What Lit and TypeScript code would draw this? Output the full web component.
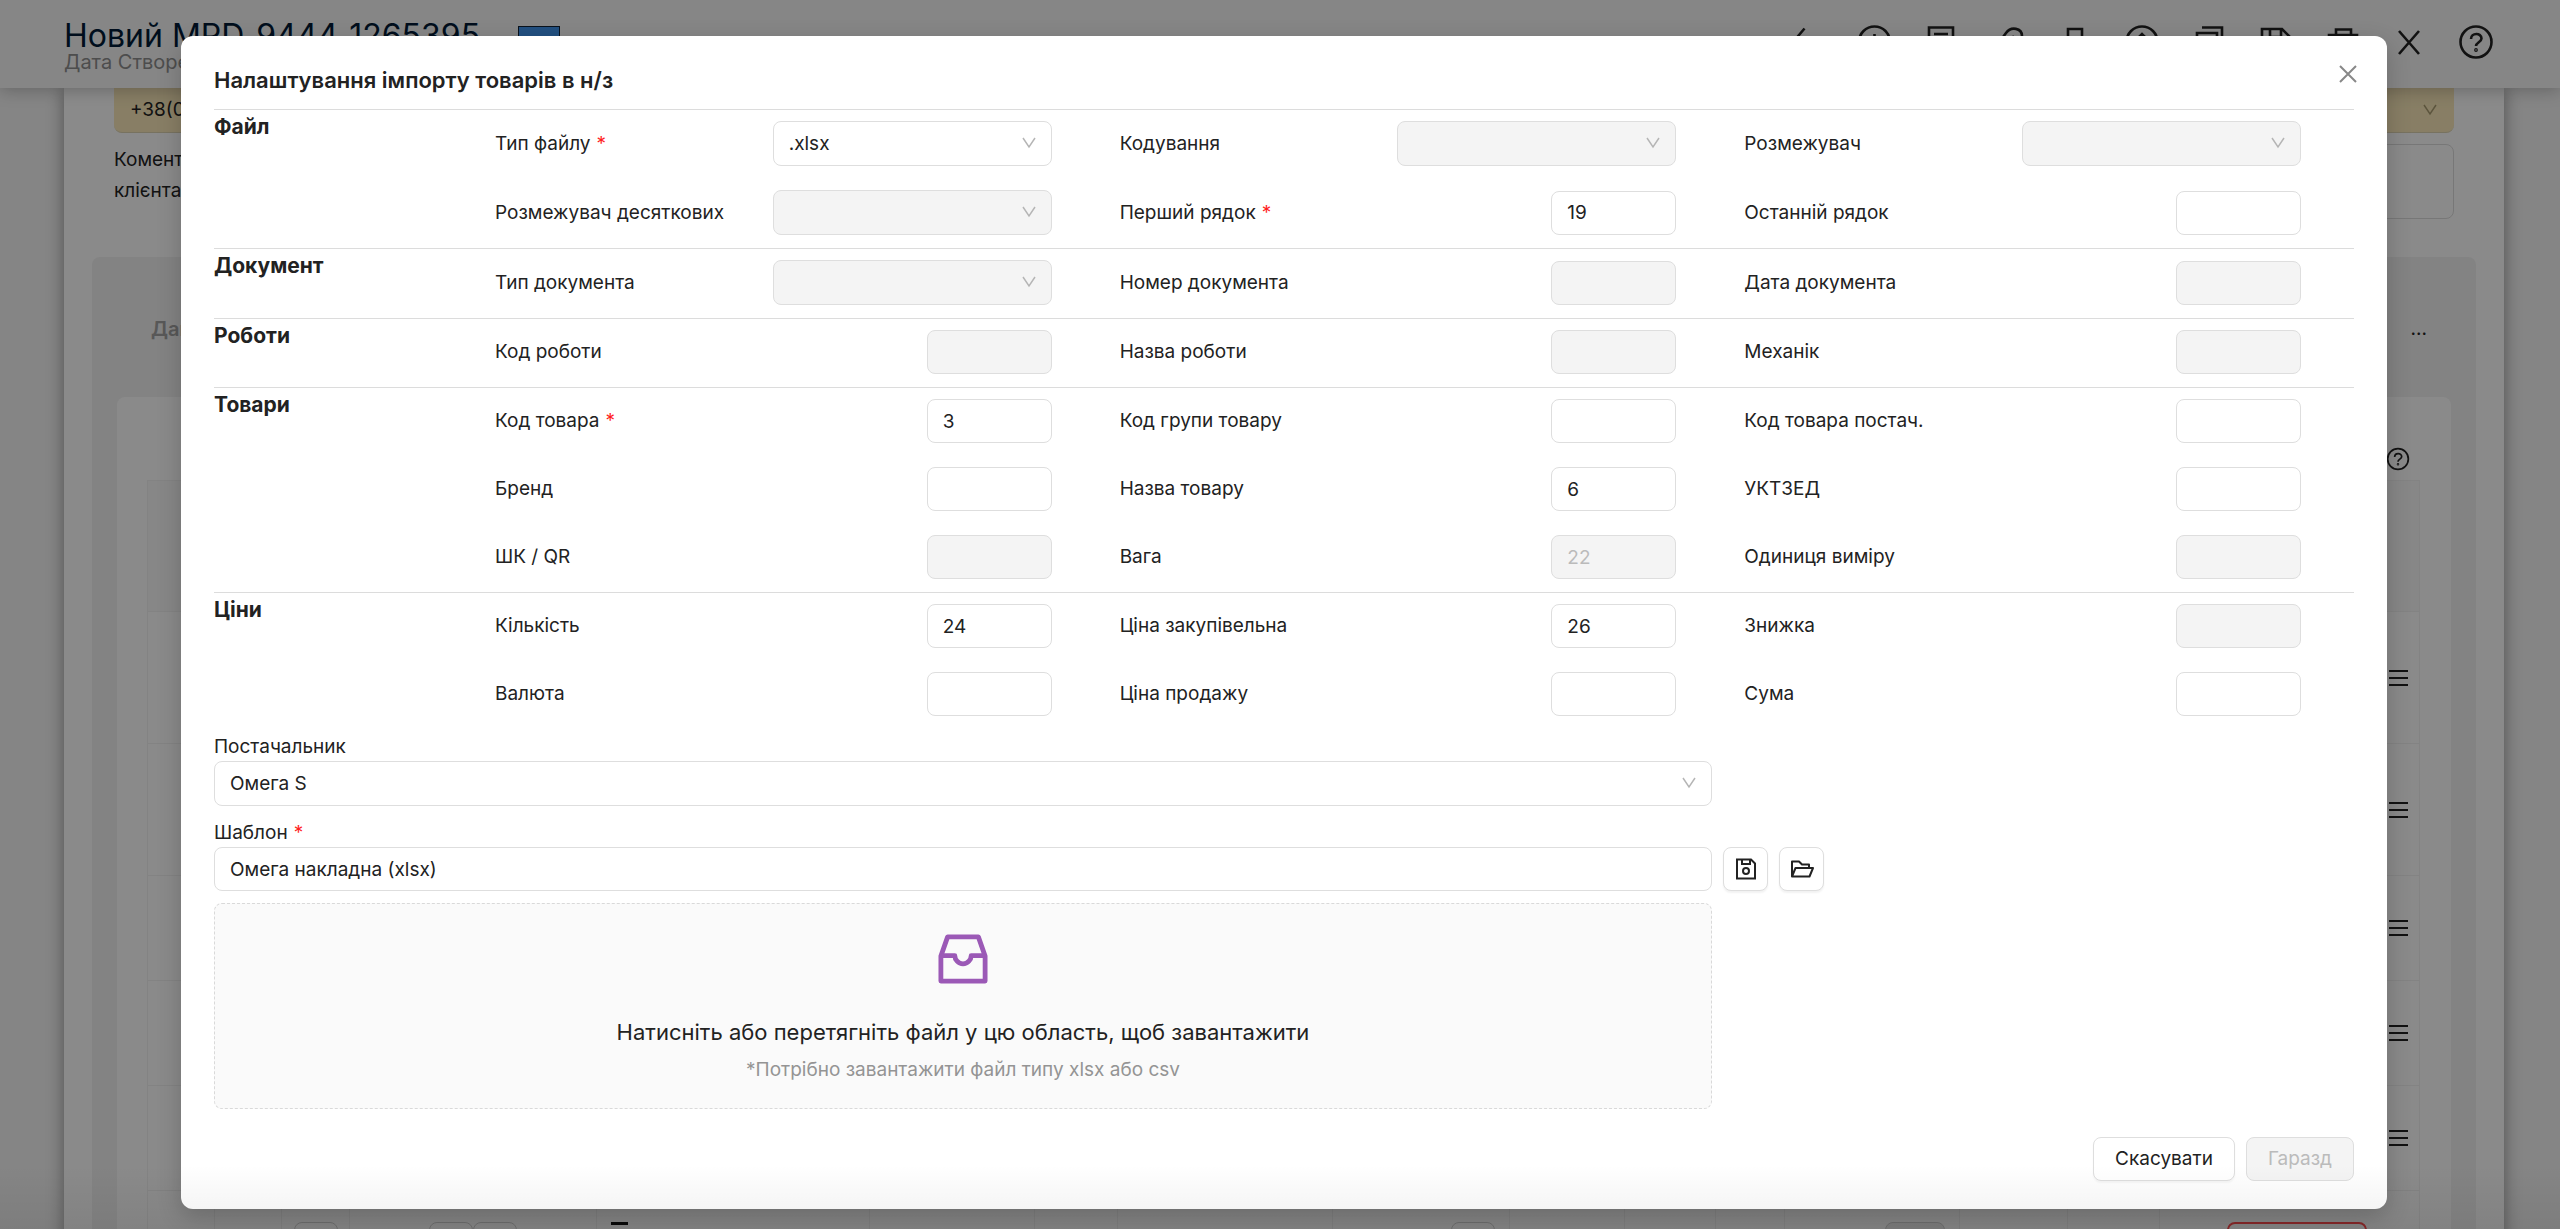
import { LitElement, html, css, svg, nothing } from "lit";
import { customElement } from "lit/decorators.js";
import { styleMap } from "lit/directives/style-map.js";

interface Field {
  label: string;
  value?: string;
  select?: boolean;
  disabled?: boolean;
  required?: boolean;
}

interface Section {
  title: string;
  fields: Field[];
}

const sections: Section[] = [
  {
    title: "Файл",
    fields: [
      { label: "Тип файлу", value: ".xlsx", select: true, required: true },
      { label: "Кодування", select: true, disabled: true },
      { label: "Розмежувач", select: true, disabled: true },
      { label: "Розмежувач десяткових", select: true, disabled: true },
      { label: "Перший рядок", value: "19", required: true },
      { label: "Останній рядок" },
    ],
  },
  {
    title: "Документ",
    fields: [
      { label: "Тип документа", select: true, disabled: true },
      { label: "Номер документа", disabled: true },
      { label: "Дата документа", disabled: true },
    ],
  },
  {
    title: "Роботи",
    fields: [
      { label: "Код роботи", disabled: true },
      { label: "Назва роботи", disabled: true },
      { label: "Механік", disabled: true },
    ],
  },
  {
    title: "Товари",
    fields: [
      { label: "Код товара", value: "3", required: true },
      { label: "Код групи товару" },
      { label: "Код товара постач." },
      { label: "Бренд" },
      { label: "Назва товару", value: "6" },
      { label: "УКТЗЕД" },
      { label: "ШК / QR", disabled: true },
      { label: "Вага", value: "22", disabled: true },
      { label: "Одиниця виміру", disabled: true },
    ],
  },
  {
    title: "Ціни",
    fields: [
      { label: "Кількість", value: "24" },
      { label: "Ціна закупівельна", value: "26" },
      { label: "Знижка", disabled: true },
      { label: "Валюта" },
      { label: "Ціна продажу" },
      { label: "Сума" },
    ],
  },
];

const questionMark = svg`<circle cx="18" cy="18" r="15.5"/><path d="M13 15c0-6.500 10.500-6.500 10.500-.5 0 3.500-5.500 4-5.500 7.500"/><circle cx="18" cy="26" r=".6"/>`;

const tools: [string, unknown][] = [
  ["Назад", svg`<path d="M16.500 4.500 6 17l10.500 13"/>`],
  ["Додати", svg`<circle cx="19.500" cy="18" r="15.500"/><path d="M19.500 10v16M11.500 18h16"/>`],
  ["Документ", svg`<path d="M7 3.500h24v29H7zM12 10h14M12 16h14"/>`],
  ["Вкладення", svg`<path d="M6 24 17 9c5-7 16-5 16 3L20 29c-4 4-8-1-6-4l11-13"/>`],
  ["Закладка", svg`<path d="M12 5h14v26l-7-7-7 7z"/>`],
  ["Завантажити", svg`<circle cx="19" cy="18" r="15.500"/><path d="M19 26V10M12 17l7-7 7 7"/>`],
  ["Копіювати", svg`<path d="M12 3.500h20v22M7 9h20v23H7z"/>`],
  ["Зберегти", svg`<path d="M5 5h20l8 8v18H5zM13 5v8h11V5"/>`],
  ["Друк", svg`<path d="M12 11V5.500h15V11M5 11h28v14H5zM11 20h17v11H11z"/>`],
  ["Закрити", svg`<path d="m8 7 20 23M28 7 8 30"/>`],
  ["Довідка", questionMark],
];

const columnWidths = [67, 67, 68, 247, 273, 165, 83, 215, 177, 115, 91, 69, 175, 108, 92, 260];
const rowKinds = ["tall", "tall", "", "", ""];

@customElement("app-root")
export class AppRoot extends LitElement {
  static styles = css`
    :host {
      display: block;
      position: relative;
      height: 100vh;
      overflow: hidden;
      background: #f2f2f2;
      color: #222;
      font: 19px/28px Inter, "Noto Sans", sans-serif;
    }
    * { box-sizing: border-box; }
    button, input, select, textarea { font: inherit; color: inherit; margin: 0; }
    svg { display: block; }

    .topbar {
      position: relative;
      display: flex;
      justify-content: space-between;
      height: 88px;
      padding: 18px 66px 0 64px;
      background: #f4f4f4;
      box-shadow: 0 2px 16px rgba(0, 0, 0, 0.25);
    }
    .doc-title {
      display: flex;
      align-items: center;
      gap: 38px;
      margin: 0;
      font-size: 32px;
      font-weight: 400;
      line-height: 36px;
      color: #001a36;
    }
    .flag { width: 42px; height: 20px; border: 1px solid #112233; background: #3f92ea; }
    .created { font-size: 20px; line-height: 16px; color: #8c8c8c; }
    .tools { display: flex; gap: 31px; padding-top: 6px; }
    .tool { padding: 0; border: 0; background: none; width: 36px; height: 36px; }
    .icon { width: 36px; height: 36px; }

    .page {
      margin: 0 56px 0 64px;
      padding: 0 28px;
      background: #fcfcfc;
      box-shadow: 0 0 16px rgba(0, 0, 0, 0.4);
    }
    .client { padding: 0 22px 38px; }
    .phone {
      display: flex;
      align-items: center;
      justify-content: space-between;
      height: 45px;
      padding: 0 16px;
      border-bottom: 1px solid #d9d0b0;
      border-radius: 0 0 8px 8px;
      background: #f7e6b8;
    }
    .comment-row { display: flex; padding-top: 11px; }
    .comment-label { width: 120px; line-height: 31px; }
    .comment { flex: 1; height: 75px; border: 1px solid #d9d9d9; border-radius: 8px; background: none; resize: none; }
    .panel { padding: 0 25px; border-radius: 8px; background: #eeeeee; }
    .tabs {
      display: flex;
      align-items: center;
      height: 140px;
      padding: 4px 24px 0 34px;
    }
    .tab { margin-right: auto; color: #a0a0a0; font-size: 20px; font-weight: 600; }
    .scan { width: 24px; height: 56px; margin: -20px 24px 0 0; }
    .more { padding: 0; border: 0; background: none; }
    .sheet { padding: 0 32px 40px 30px; border-radius: 8px; background: #fcfcfc; }
    .sheet-head { display: flex; justify-content: flex-end; height: 83px; padding: 50px 9px 0 0; }
    .help { width: 24px; height: 24px; padding: 0; border: 0; background: none; }
    .help .icon { width: 24px; height: 24px; }
    .lines { width: 100%; table-layout: fixed; border-collapse: collapse; border: 1px solid #efefef; }
    .lines th { height: 131px; padding: 0; background: #f6f6f6; }
    .lines td { height: 105px; padding: 0; border: 1px solid #efefef; border-width: 1px 0; }
    .lines .tall td { height: 132px; }
    .lines .totals td { padding: 31px 14px 0; border-width: 1px; vertical-align: top; }
    .bars { width: 19px; height: 18px; margin: 0 11px 0 auto; }
    .boxes { display: flex; justify-content: center; }
    .boxes.end { justify-content: flex-end; }
    .box { flex: none; width: 44px; height: 44px; border: 1px solid #cfcfcf; border-radius: 8px; }
    .box.long { width: 60px; background: #ececec; }
    .box.alert { width: 140px; margin-left: 14px; border: 2px solid #ff4d4f; }
    .dash { display: block; width: 17px; height: 3px; background: #111; }

    .overlay { position: absolute; inset: 0; padding: 36px 173px 20px 181px; background: rgba(0, 0, 0, 0.45); }
    .overlay::after {
      content: "";
      position: absolute;
      inset: auto 0 0;
      height: 64px;
      background: linear-gradient(transparent, rgba(0, 0, 0, 0.06));
      pointer-events: none;
    }
    .modal {
      display: flex;
      flex-direction: column;
      height: 100%;
      padding: 31px 33px 28px;
      border-radius: 12px;
      background: #fff;
      box-shadow: 0 8px 24px rgba(0, 0, 0, 0.2);
    }
    .modal-head { display: flex; justify-content: space-between; height: 42px; }
    .modal-title { margin: 0; font-size: 22px; font-weight: 600; line-height: 26px; }
    .close { width: 24px; height: 24px; margin: -5px -6px 0 0; padding: 0; border: 0; background: none; color: #888; }
    .section { display: grid; grid-template-columns: 281px 1fr; border-top: 1px solid #dcdcdc; }
    .section-title { margin: 0; padding-top: 3px; font-size: 21px; font-weight: 700; line-height: 28px; }
    .fields { display: grid; grid-template-columns: repeat(3, 1fr); gap: 24px 68px; padding: 11px 53px 13px 0; }
    .field { display: flex; align-items: center; justify-content: space-between; }
    .required::after { content: "*"; margin-left: 6px; color: #ff1f1f; }
    .input {
      width: 125px;
      height: 44px;
      padding: 0 15px;
      border: 1px solid #dedede;
      border-radius: 8px;
      background: #fff;
      outline: 0;
    }
    .input:disabled { background: #f4f4f4; color: #bbb; opacity: 1; }
    .select { position: relative; display: flex; width: 279px; }
    .select .input { width: 100%; height: 45px; appearance: none; }
    .select.wide { width: 100%; }
    .chevron { position: absolute; right: 15px; top: 14px; width: 16px; height: 16px; color: #b5b5b5; pointer-events: none; }
    .phone .chevron { position: static; color: #a89a70; }

    .lower { display: grid; grid-template-columns: 70% 1fr; column-gap: 11px; padding-top: 4px; }
    .lower-label { grid-column: 1 / -1; line-height: 28px; }
    .lower-label.next { margin-top: 13px; }
    .lower .input { width: 100%; }
    .actions { display: flex; gap: 11px; }
    .icon-button {
      display: grid;
      place-items: center;
      width: 45px;
      height: 44px;
      padding: 0;
      border: 1px solid #dedede;
      border-radius: 8px;
      background: #fff;
      box-shadow: 0 2px 2px #f2f2f2;
    }
    .icon-button svg { width: 24px; height: 24px; }
    .dropzone {
      grid-column: 1;
      display: flex;
      flex-direction: column;
      align-items: center;
      height: 206px;
      margin-top: 12px;
      padding: 30px 24px 0;
      border: 1px dashed #d9d9d9;
      border-radius: 8px;
      background: #fafafa;
    }
    .inbox { width: 50px; height: 50px; color: #9b59b6; }
    .drop-text { margin-top: 32px; font-size: 22px; line-height: 32px; }
    .drop-hint { margin-top: 8px; color: #949494; }

    .footer { display: flex; justify-content: flex-end; gap: 11px; margin-top: auto; }
    .button { height: 44px; padding: 0 21px; border: 1px solid #dedede; border-radius: 8px; background: #fff; box-shadow: 0 2px 2px #f6f6f6; }
    .button:disabled { background: #f4f4f4; color: #bbb; box-shadow: none; }
  `;

  private icon(body: unknown) {
    return html`<svg class="icon" viewBox="0 0 36 36" fill="none" stroke="currentColor" stroke-width="2.600" aria-hidden="true">${body}</svg>`;
  }

  private chevron() {
    return html`<svg class="chevron" viewBox="0 0 16 16" fill="none" stroke="currentColor" stroke-width="1.500" aria-hidden="true"><path d="m2 3 6 9 6-9"/></svg>`;
  }

  private bars() {
    return html`<svg class="bars" viewBox="0 0 19 18" stroke="currentColor" stroke-width="2" aria-hidden="true"><path d="M0 2h19M0 9h19M0 16h19"/></svg>`;
  }

  private totalsCell(index: number) {
    switch (index) {
      case 2:
        return html`<div class="boxes"><span class="box"></span></div>`;
      case 3:
        return html`<div class="boxes"><span class="box"></span><span class="box"></span></div>`;
      case 4:
        return html`<span class="dash"></span>`;
      case 8:
        return html`<div class="boxes end"><span class="box"></span></div>`;
      case 12:
        return html`<div class="boxes end"><span class="box long"></span></div>`;
      case 15:
        return html`<div class="boxes"><span class="box alert"></span></div>`;
      default:
        return nothing;
    }
  }

  private field(f: Field, id: string) {
    return html`
      <div class="field">
        <label class=${f.required ? "required" : "plain"} for=${id}>${f.label}</label>
        ${f.select
          ? html`<span class="select">
              <select class="input" id=${id} ?disabled=${f.disabled}><option>${f.value ?? nothing}</option></select>
              ${this.chevron()}
            </span>`
          : html`<input class="input" id=${id} .value=${f.value ?? ""} ?disabled=${f.disabled}>`}
      </div>
    `;
  }

  render() {
    return html`
      <header class="topbar">
        <div>
          <h1 class="doc-title">Новий MPD_9444_1265395 <span class="flag"></span></h1>
          <div class="created">Дата Створення</div>
        </div>
        <nav class="tools">
          ${tools.map(([name, body]) => html`<button class="tool" aria-label=${name}>${this.icon(body)}</button>`)}
        </nav>
      </header>

      <main class="page">
        <div class="client">
          <div class="phone"><span>+38(0</span>${this.chevron()}</div>
          <div class="comment-row">
            <label class="comment-label" for="comment">Коментар клієнта</label>
            <textarea class="comment" id="comment"></textarea>
          </div>
        </div>
        <div class="panel">
          <div class="tabs">
            <span class="tab">Дані</span>
            <svg class="scan" viewBox="0 0 24 56" fill="none" stroke="currentColor" stroke-width="2" aria-hidden="true">
              <path d="M14 1h9v16M14 55h9V22"/>
            </svg>
            <button class="more" aria-label="Більше">...</button>
          </div>
          <div class="sheet">
            <div class="sheet-head"><button class="help" aria-label="Довідка">${this.icon(questionMark)}</button></div>
            <table class="lines">
              <colgroup>${columnWidths.map((w) => html`<col style=${styleMap({ width: `${w}px` })}>`)}</colgroup>
              <thead><tr><th colspan="16"></th></tr></thead>
              <tbody>
                ${rowKinds.map((kind) => html`<tr class=${kind}><td colspan="15"></td><td>${this.bars()}</td></tr>`)}
                <tr class="totals">${columnWidths.map((_, i) => html`<td>${this.totalsCell(i)}</td>`)}</tr>
              </tbody>
            </table>
          </div>
        </div>
      </main>

      <div class="overlay">
        <section class="modal" role="dialog" aria-labelledby="modal-title">
          <div class="modal-head">
            <h2 class="modal-title" id="modal-title">Налаштування імпорту товарів в н/з</h2>
            <button class="close" aria-label="Закрити">
              <svg viewBox="0 0 24 24" fill="none" stroke="currentColor" stroke-width="2"><path d="m4 4 16 16M20 4 4 20"/></svg>
            </button>
          </div>
          ${sections.map(
            (s, i) => html`
              <div class="section">
                <h3 class="section-title">${s.title}</h3>
                <div class="fields">${s.fields.map((f, j) => this.field(f, `field-${i}-${j}`))}</div>
              </div>
            `,
          )}
          <div class="lower">
            <label class="lower-label" for="supplier">Постачальник</label>
            <span class="select wide">
              <select class="input" id="supplier"><option>Омега S</option></select>
              ${this.chevron()}
            </span>
            <label class="lower-label next required" for="template">Шаблон</label>
            <input class="input" id="template" .value=${"Омега накладна (xlsx)"}>
            <div class="actions">
              <button class="icon-button" aria-label="Зберегти шаблон">
                <svg viewBox="0 0 24 24" fill="none" stroke="currentColor" stroke-width="2">
                  <path d="M3 2.500h14l4 4v15H3zM8 2.500V7h8V2.500"/><circle cx="12" cy="14" r="3"/>
                </svg>
              </button>
              <button class="icon-button" aria-label="Відкрити шаблон">
                <svg viewBox="0 0 24 24" fill="none" stroke="currentColor" stroke-width="2" stroke-linejoin="round">
                  <path d="M2 19.500v-15h7l3 3h7v3.500M2 19.500 5.500 11H23l-3.500 8.500z"/>
                </svg>
              </button>
            </div>
            <div class="dropzone">
              <svg class="inbox" viewBox="0 0 52 52" fill="none" stroke="currentColor" stroke-width="5" stroke-linejoin="round" aria-hidden="true">
                <path d="M10 3h32l7 20v26H3V23z"/>
                <path d="M3.500 22.500h14c0 4 3.500 8.500 8.500 8.500s8.500-4.500 8.500-8.500h14"/>
              </svg>
              <div class="drop-text">Натисніть або перетягніть файл у цю область, щоб завантажити</div>
              <div class="drop-hint">*Потрібно завантажити файл типу xlsx або csv</div>
            </div>
          </div>
          <div class="footer">
            <button class="button">Скасувати</button>
            <button class="button" disabled>Гаразд</button>
          </div>
        </section>
      </div>
    `;
  }
}
